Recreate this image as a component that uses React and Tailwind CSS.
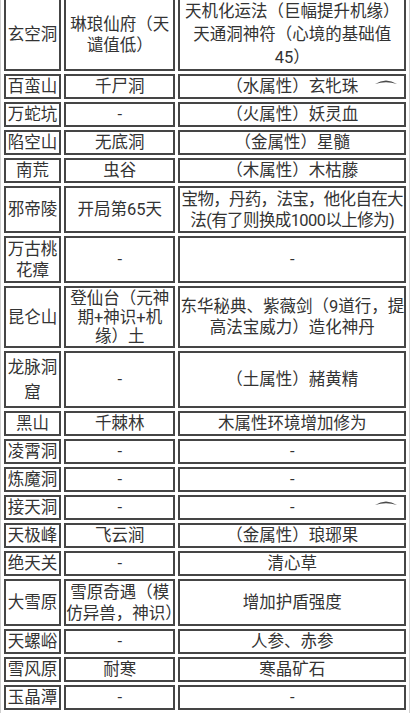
import React from 'react'

const rows = [
    { h: 'h-[73px]', a: ['玄空洞'], b: ['琳琅仙府（天', '谴值低）'], c: ['天机化运法（巨幅提升机缘）', '天通洞神符（心境的基础值', '45）'], lc: 'leading-[23px]' },
    { h: 'h-[25px]', a: ['百蛮山'], b: ['千尸洞'], c: ['（水属性）玄牝珠'], arc: true },
    { h: 'h-[25px]', a: ['万蛇坑'], b: ['-'], c: ['（火属性）妖灵血'] },
    { h: 'h-[25px]', a: ['陷空山'], b: ['无底洞'], c: ['（金属性）星髓'] },
    { h: 'h-[25px]', a: ['南荒'], b: ['虫谷'], c: ['（木属性）木枯藤'] },
    { h: 'h-[47px]', a: ['邪帝陵'], b: ['开局第65天'], c: ['宝物，丹药，法宝，他化自在大', '法(有了则换成1000以上修为)'], tight: true },
    { h: 'h-[47px]', a: ['万古桃', '花瘴'], b: ['-'], c: ['-'] },
    { h: 'h-[62px]', a: ['昆仑山'], b: ['登仙台（元神', '期+神识+机', '缘）土'], c: ['东华秘典、紫薇剑（9道行，提', '高法宝威力）造化神丹'], lb: 'leading-[19px]' },
    { h: 'h-[57px]', a: ['龙脉洞', '窟'], b: ['-'], c: ['（土属性）赭黄精'], la: 'leading-[25px]' },
    { h: 'h-[25px]', a: ['黑山'], b: ['千棘林'], c: ['木属性环境增加修为'] },
    { h: 'h-[25px]', a: ['凌霄洞'], b: ['-'], c: ['-'] },
    { h: 'h-[25px]', a: ['炼魔洞'], b: ['-'], c: ['-'] },
    { h: 'h-[25px]', a: ['接天洞'], b: ['-'], c: ['-'], arc: true },
    { h: 'h-[25px]', a: ['天极峰'], b: ['飞云涧'], c: ['（金属性）琅琊果'] },
    { h: 'h-[25px]', a: ['绝天关'], b: ['-'], c: ['清心草'] },
    { h: 'h-[47px]', a: ['大雪原'], b: ['雪原奇遇（模', '仿异兽，神识）'], c: ['增加护盾强度'] },
    { h: 'h-[25px]', a: ['天螺峪'], b: ['-'], c: ['人参、赤参'] },
    { h: 'h-[25px]', a: ['雪风原'], b: ['耐寒'], c: ['寒晶矿石'] },
    { h: 'h-[25px]', a: ['玉晶潭'], b: ['-'], c: ['-'] },
]

function Lines({ lines, className = '', lineClass = [] }) {
    return lines.map((l, i) => (
        <div key={i} className={`whitespace-nowrap ${className} ${lineClass[i] || ''}`}>{l}</div>
    ))
}

// little crescent smudge that sits in two of the cells
function Arc() {
    return (
        <svg className="absolute top-[2px] right-[7px]" width="22" height="7" viewBox="0 0 22 7">
            <path d="M0 6 Q11 -1 22 6 Q11 2.5 0 6Z" fill="#4a4a4a" />
        </svg>
    )
}

export default function App() {
    const cell = 'border-2 border-[#454545] p-0 text-center align-middle'
    return (
        <div className="h-[713px] w-[413px] overflow-hidden bg-white text-[#333] text-[16.5px] leading-[21px]"
            style={{ fontFamily: 'Roboto, "Noto Sans CJK SC", sans-serif' }}>
            <table className="-mt-[6px] w-[410px] table-fixed border-separate border-spacing-[3px] border border-[#cfcfcf]">
                <colgroup>
                    <col className="w-[57px]" />
                    <col className="w-[111px]" />
                    <col className="w-[227px]" />
                </colgroup>
                <tbody>
                    {rows.map((r, i) => (
                        <tr key={i} className={r.h}>
                            <td className={cell}>
                                <Lines lines={r.a} className={r.la || ''} />
                            </td>
                            <td className={cell}>
                                <Lines lines={r.b} className={r.lb || ''} />
                            </td>
                            <td className={`${cell} relative`}>
                                <Lines
                                    lines={r.c}
                                    className={r.lc || ''}
                                    lineClass={r.tight ? ['tracking-[-0.7px]', 'tracking-[-0.6px]'] : []}
                                />
                                {r.arc && <Arc />}
                            </td>
                        </tr>
                    ))}
                </tbody>
            </table>
        </div>
    )
}
